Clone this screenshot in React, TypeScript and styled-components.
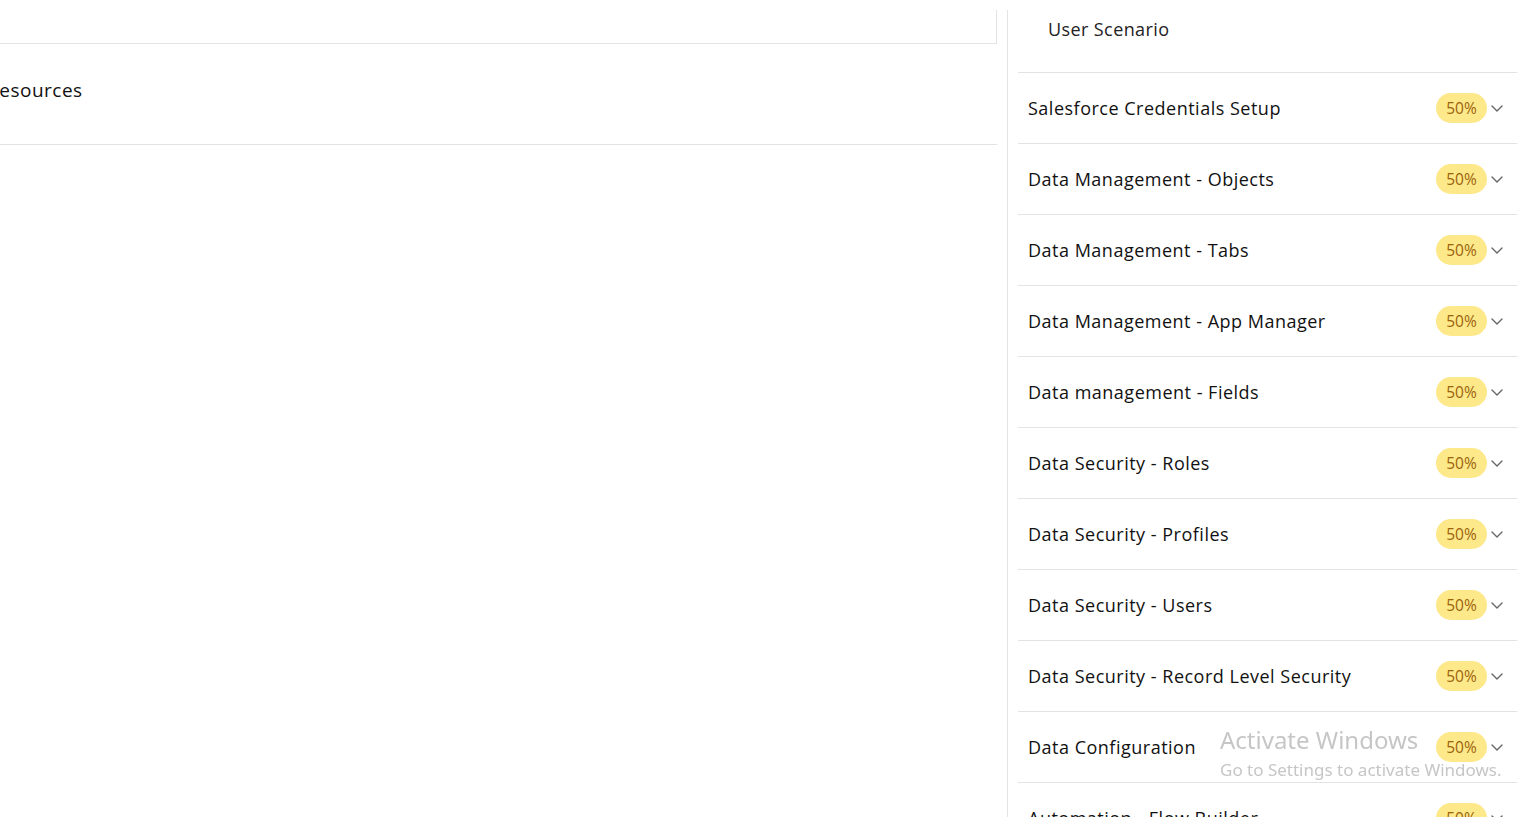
import React from "react";
import styled, { createGlobalStyle } from "styled-components";

const Global = createGlobalStyle`
  html, body { margin: 0; padding: 0; background: #fff; overflow: hidden; }
  body { font-family: "Open Sans", "Liberation Sans", sans-serif; color: #111; }
`;

const Page = styled.div`
  display: flex;
  width: 1530px;
  height: 817px;
  padding-top: 10px;
  box-sizing: border-box;
  overflow: hidden;
`;

const LeftColumn = styled.div`
  width: 997px;
  flex: none;
  display: flex;
  flex-direction: column;
`;

const TopBox = styled.div`
  height: 34px;
  flex: none;
  border-right: 1px solid #e3e3e3;
  border-bottom: 1px solid #e3e3e3;
  box-sizing: border-box;
`;

const ResourceRow = styled.div`
  height: 101px;
  flex: none;
  border-bottom: 1px solid #e3e3e3;
  box-sizing: border-box;
  display: flex;
  align-items: center;
  padding-bottom: 8px;
  overflow: hidden;
`;

const ResourceTitle = styled.span`
  font-size: 19px;
  font-weight: 500;
  color: #111;
  margin-left: -13px;
  letter-spacing: 0.5px;
`;

const Spacer = styled.div`
  width: 10px;
  flex: none;
`;

const RightColumn = styled.div`
  flex: 1;
  border-left: 1px solid #e3e3e3;
  padding: 0 13px 0 10px;
  display: flex;
  flex-direction: column;
`;

const ScenarioHeader = styled.div`
  height: 62px;
  flex: none;
  display: flex;
  align-items: flex-start;
  padding: 7px 0 0 30px;
  box-sizing: border-box;
  font-size: 18px;
  color: #222;
  letter-spacing: 0.4px;
`;

const Row = styled.div`
  height: 71px;
  flex: none;
  border-top: 1px solid #e3e3e3;
  box-sizing: border-box;
  display: flex;
  align-items: center;
  padding: 0 13px 0 10px;
`;

const RowTitle = styled.span`
  flex: 1;
  font-size: 18px;
  font-weight: 500;
  color: #111;
  letter-spacing: 0.5px;
`;

const Badge = styled.span`
  width: 51px;
  height: 30px;
  border-radius: 15px;
  background: #fde98a;
  color: #9c620c;
  font-size: 15.5px;
  display: inline-flex;
  align-items: center;
  justify-content: center;
`;

const Chevron = styled.svg`
  margin-left: 3px;
  width: 14px;
  height: 14px;
  flex: none;
`;

const Watermark = styled.div`
  position: fixed;
  left: 1220px;
  top: 724px;
  font-family: "Noto Sans", "Open Sans", sans-serif;
  color: #c6c6c6;
  pointer-events: none;
`;

const WatermarkTitle = styled.div`
  font-size: 24px;
  line-height: 32px;
`;

const WatermarkSub = styled.div`
  font-size: 17px;
  line-height: 22px;
  margin-top: 3px;
`;

const items = [
  "Salesforce Credentials Setup",
  "Data Management - Objects",
  "Data Management - Tabs",
  "Data Management - App Manager",
  "Data management - Fields",
  "Data Security - Roles",
  "Data Security - Profiles",
  "Data Security - Users",
  "Data Security - Record Level Security",
  "Data Configuration",
  "Automation - Flow Builder",
];

export default function App() {
  return (
    <>
      <Global />
      <Page>
        <LeftColumn>
          <TopBox />
          <ResourceRow>
            <ResourceTitle>Resources</ResourceTitle>
          </ResourceRow>
        </LeftColumn>
        <Spacer />
        <RightColumn>
          <ScenarioHeader>User Scenario</ScenarioHeader>
          {items.map((t) => (
            <Row key={t}>
              <RowTitle>{t}</RowTitle>
              <Badge>50%</Badge>
              <Chevron viewBox="0 0 14 14" fill="none">
                <path d="M2 5 L7 10 L12 5" stroke="#666" strokeWidth="1.4" strokeLinecap="round" strokeLinejoin="round" />
              </Chevron>
            </Row>
          ))}
        </RightColumn>
      </Page>
      <Watermark>
        <WatermarkTitle>Activate Windows</WatermarkTitle>
        <WatermarkSub>Go to Settings to activate Windows.</WatermarkSub>
      </Watermark>
    </>
  );
}
